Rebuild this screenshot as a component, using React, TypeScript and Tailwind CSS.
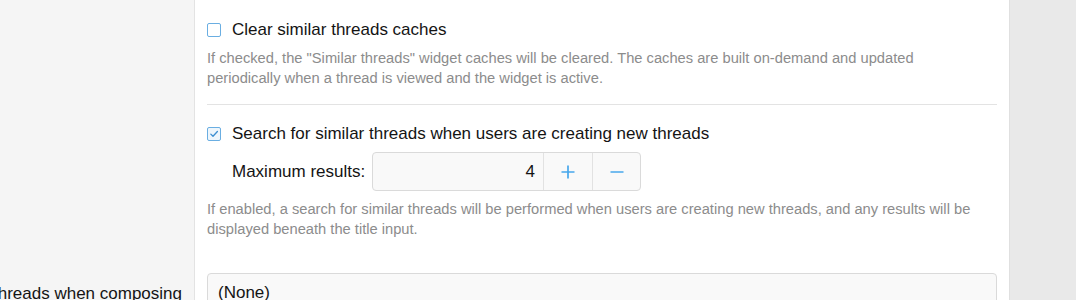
import React from "react";

const font = { fontFamily: '"Liberation Sans", Arial, Helvetica, sans-serif' };

function Checkbox({ checked }: { checked?: boolean }) {
  return (
    <span
      className={
        "flex h-[14px] w-[14px] shrink-0 items-center justify-center rounded-[2px] border-[1.5px] border-[#6aaee2] " +
        (checked ? "bg-[#eef6fc]" : "bg-white")
      }
    >
      {checked && (
        <svg width="10" height="10" viewBox="0 0 10 10" fill="none">
          <path d="M1.8 5.1 L4 7.3 L8.4 2.5" stroke="#3d8fd1" strokeWidth="1.3" strokeLinecap="round" strokeLinejoin="round" />
        </svg>
      )}
    </span>
  );
}

export default function App() {
  return (
    <div className="flex h-[300px] w-full overflow-hidden bg-white text-[#141414]" style={font}>
      <div className="flex w-[1009px] shrink-0 flex-col">
        {/* Row 1 */}
        <div className="flex">
          <div className="w-[195px] shrink-0 border-r border-[#e3e3e3] bg-[#f5f5f5]" />
          <div className="flex-1 px-3">
            <div className="pt-[20px] pb-[16px]">
              <label className="flex h-5 items-center gap-[11px] text-[17px] leading-5">
                <Checkbox />
                <span>Clear similar threads caches</span>
              </label>
              <div className="mt-[8px] text-[14.7px] leading-5 text-[#8c8c8c]">
                If checked, the "Similar threads" widget caches will be cleared. The caches are built on-demand and updated
                <br />
                periodically when a thread is viewed and the widget is active.
              </div>
            </div>
            <div className="h-px bg-[#e3e3e3]" />
            <div className="pt-[19px] pb-[34px]">
              <label className="flex h-5 items-center gap-[11px] text-[17px] leading-5">
                <Checkbox checked />
                <span>Search for similar threads when users are creating new threads</span>
              </label>
              <div className="mt-[8px] flex items-center pl-[25px]">
                <span className="w-[140px] text-[17px]">Maximum results:</span>
                <div className="flex h-[39px] w-[269px] overflow-hidden rounded-[4px] border border-[#dadada] bg-[#f9f9f9]">
                  <div className="flex w-[170px] items-center justify-end pr-2 text-[17px]">4</div>
                  <div className="flex w-[49px] items-center justify-center border-l border-[#e2e2e2]">
                    <svg width="14" height="14" viewBox="0 0 14 14">
                      <path d="M7 0.5 V13.5 M0.5 7 H13.5" stroke="#47a7eb" strokeWidth="1.7" />
                    </svg>
                  </div>
                  <div className="flex flex-1 items-center justify-center border-l border-[#e2e2e2]">
                    <svg width="14" height="14" viewBox="0 0 14 14">
                      <path d="M0.5 7 H13.5" stroke="#47a7eb" strokeWidth="1.7" />
                    </svg>
                  </div>
                </div>
              </div>
              <div className="mt-2 text-[14.7px] leading-5 text-[#8c8c8c]">
                If enabled, a search for similar threads will be performed when users are creating new threads, and any results will be
                <br />
                displayed beneath the title input.
              </div>
            </div>
          </div>
        </div>
        {/* Row 2 */}
        <div className="flex flex-1">
          <div className="flex w-[195px] shrink-0 justify-end overflow-hidden whitespace-nowrap border-r border-[#e3e3e3] bg-[#f5f5f5] pr-3 pt-[9px] text-[17px] leading-6">
            <span>Search for similar threads when composing</span>
          </div>
          <div className="flex-1 px-3">
            <div className="flex h-[39px] items-center rounded-[4px] border border-[#dadada] bg-[#f9f9f9] px-[10px] text-[17px]">
              (None)
            </div>
          </div>
        </div>
      </div>
      <div className="flex-1 border-l border-[#e0e0e0] bg-[#e9e9e9]" />
    </div>
  );
}
